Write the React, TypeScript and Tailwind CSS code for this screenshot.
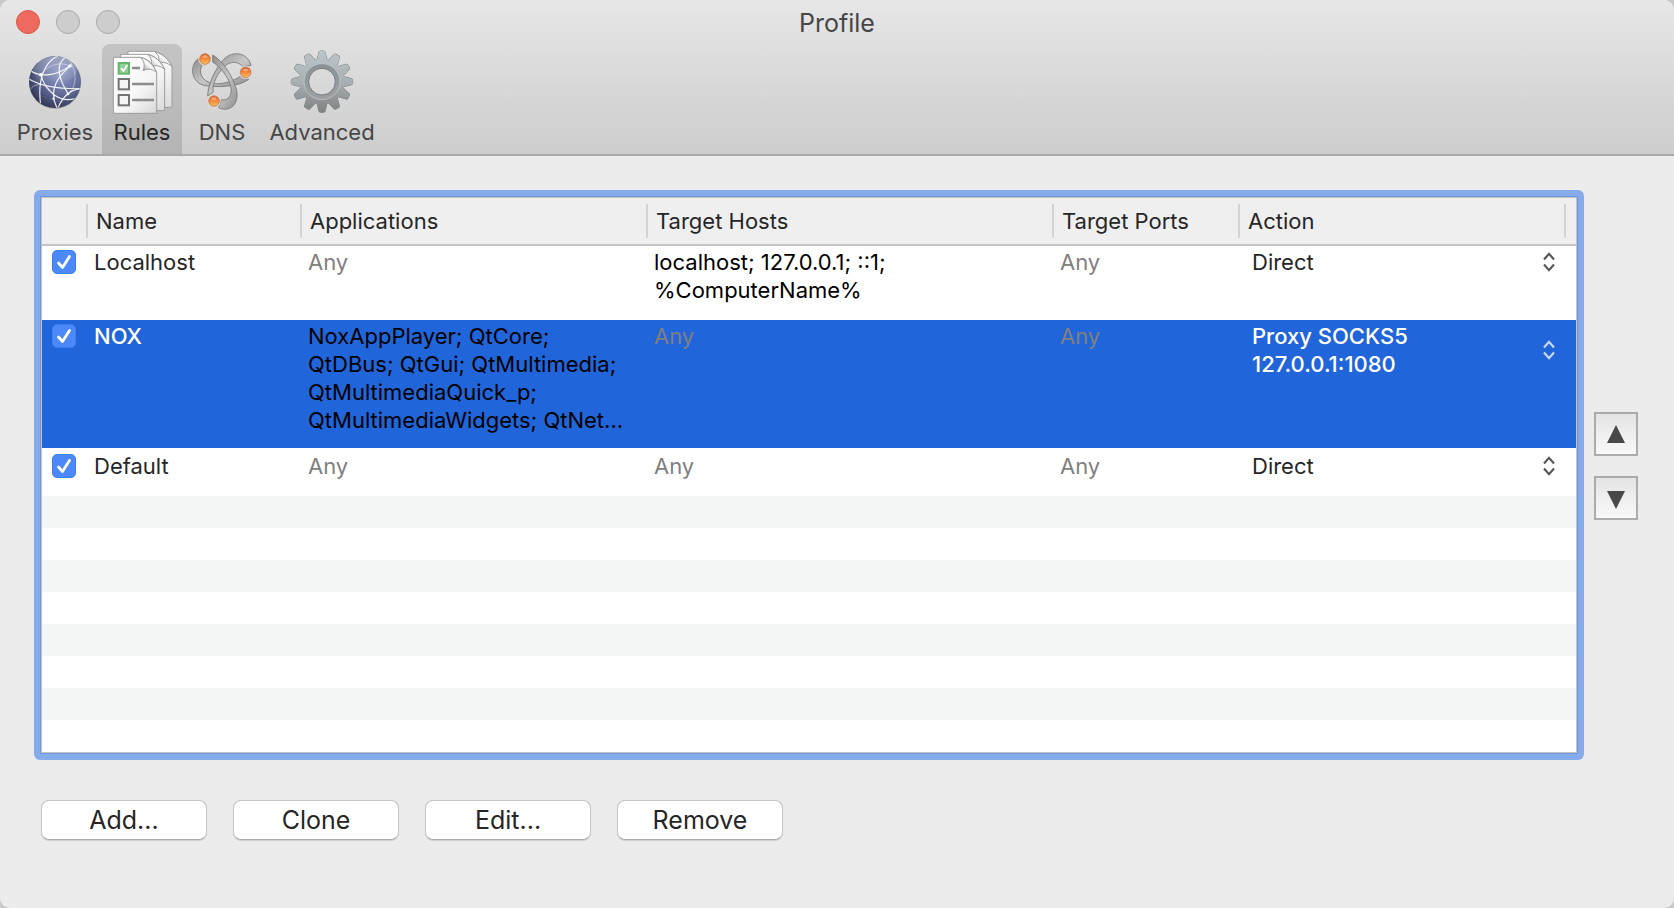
import { useState } from 'react';
import type { ReactNode } from 'react';

interface Rule {
  id: string;
  name: string;
  enabled: boolean;
  applications?: string;
  hosts?: string;
  ports?: string;
  action: string;
  actionDetail?: string;
}

const initialRules: Rule[] = [
  {
    id: 'localhost',
    name: 'Localhost',
    enabled: true,
    hosts: 'localhost; 127.0.0.1; ::1; %ComputerName%',
    action: 'Direct',
  },
  {
    id: 'nox',
    name: 'NOX',
    enabled: true,
    applications:
      'NoxAppPlayer; QtCore; QtDBus; QtGui; QtMultimedia; QtMultimediaQuick_p; QtMultimediaWidgets; QtNet...',
    action: 'Proxy SOCKS5',
    actionDetail: '127.0.0.1:1080',
  },
  { id: 'default', name: 'Default', enabled: true, action: 'Direct' },
];

// Row heights and top padding per rule
const rowStyles: Record<string, { height: string; pad: string }> = {
  localhost: { height: 'h-[74px]', pad: 'pt-0.5' },
  nox: { height: 'h-32', pad: 'pt-0.5' },
  default: { height: 'h-12', pad: 'pt-1' },
};

const GlobeIcon = () => (
  <svg viewBox="69 30 192 192" className="size-16" aria-hidden="true">
    <defs>
      <radialGradient id="globe" cx="0.62" cy="0.35" r="0.75">
        <stop offset="0" stopColor="#8f9cc8" />
        <stop offset="0.5" stopColor="#626d9a" />
        <stop offset="0.85" stopColor="#3a3f60" />
        <stop offset="1" stopColor="#25283f" />
      </radialGradient>
      <linearGradient id="globeShine" x1="0" y1="0" x2="0" y2="1">
        <stop offset="0" stopColor="#ffffff" stopOpacity="0.35" />
        <stop offset="1" stopColor="#ffffff" stopOpacity="0" />
      </linearGradient>
      <clipPath id="globeClip">
        <circle cx="165" cy="126" r="77" />
      </clipPath>
    </defs>
    <ellipse cx="165" cy="130" rx="77" ry="77" fill="#000" opacity="0.18" />
    <circle cx="165" cy="126" r="78" fill="url(#globe)" />
    <g clipPath="url(#globeClip)" fill="none" stroke="#fff">
      <ellipse cx="165" cy="90" rx="66" ry="42" fill="url(#globeShine)" stroke="none" />
      <g strokeWidth="3.5" opacity="0.92">
        <path d="M92 92C120 112 172 110 214 74" />
        <path d="M174 48C136 64 108 118 124 208" />
        <path d="M198 52C164 70 176 118 206 164" />
        <path d="M86 117C124 138 182 148 246 146" />
        <path d="M214 76C176 106 142 150 172 206" />
        <path d="M122 104C138 158 180 188 226 176" />
        <path d="M244 146C214 148 188 168 172 208" />
      </g>
      <g strokeWidth="2.5" opacity="0.55">
        <path d="M122 104C142 78 176 62 210 78" />
        <path d="M208 60C232 96 232 142 200 166" />
        <path d="M88 150C110 124 142 128 164 170" />
      </g>
    </g>
    <g fill="#fff">
      <circle cx="122" cy="104" r="5" />
      <circle cx="210" cy="78" r="5" />
      <circle cx="204" cy="162" r="4" />
      <circle cx="160" cy="176" r="3" />
    </g>
  </svg>
);

const RulesIcon = () => (
  <svg viewBox="30 30 192 192" className="size-16" aria-hidden="true">
    <defs>
      <linearGradient id="page" x1="0" y1="0" x2="1" y2="1">
        <stop offset="0" stopColor="#ffffff" />
        <stop offset="0.6" stopColor="#f6f6f6" />
        <stop offset="1" stopColor="#d8d8d8" />
      </linearGradient>
      <linearGradient id="curl" x1="0" y1="1" x2="1" y2="0">
        <stop offset="0" stopColor="#757575" />
        <stop offset="0.5" stopColor="#fafafa" />
        <stop offset="1" stopColor="#b4b4b4" />
      </linearGradient>
    </defs>
    <g stroke="#9c9c9c" strokeWidth="3">
      <path d="M84 34H164C184 38 204 56 216 80V202H84Z" fill="url(#page)" />
      <path d="M164 35C176 44 180 56 174 70C188 64 204 68 216 80C206 58 188 40 164 35Z" fill="url(#curl)" />
      <path d="M62 43H144C164 47 182 64 194 88V212H62Z" fill="url(#page)" />
      <path d="M144 44C154 52 158 66 152 80C168 74 184 78 194 88C184 66 166 48 144 44Z" fill="url(#curl)" />
      <path d="M40 52H122C142 56 160 72 170 98V220H40Z" fill="url(#page)" />
      <path d="M122 53C132 62 136 76 129 92C146 84 160 88 170 98C160 74 144 56 122 53Z" fill="url(#curl)" />
    </g>
    <rect x="56" y="69" width="31" height="32" fill="#8fd096" stroke="#62b56a" strokeWidth="6" />
    <path d="M63 84L70 93L82 75" fill="none" stroke="#fff" strokeWidth="5" />
    <g fill="#f5f5f5" stroke="#747474" strokeWidth="6">
      <rect x="56" y="117" width="31" height="31" />
      <rect x="56" y="165" width="31" height="31" />
    </g>
    <g stroke="#8c8c8c" strokeWidth="8">
      <path d="M96 84H120" />
      <path d="M96 132H162" />
      <path d="M96 180H162" />
    </g>
  </svg>
);

const DnsIcon = () => (
  <svg viewBox="30 30 192 192" className="size-16" aria-hidden="true">
    <defs>
      <linearGradient id="blade" x1="0" y1="0" x2="1" y2="1">
        <stop offset="0" stopColor="#8e8e8e" />
        <stop offset="0.5" stopColor="#c6c6c6" />
        <stop offset="1" stopColor="#8e8e8e" />
      </linearGradient>
      <linearGradient id="node" x1="0" y1="0" x2="0" y2="1">
        <stop offset="0" stopColor="#e2601c" />
        <stop offset="0.4" stopColor="#f0803a" />
        <stop offset="1" stopColor="#ffbe58" />
      </linearGradient>
    </defs>
    <g fill="url(#blade)" stroke="#767676" strokeWidth="2.5" strokeLinejoin="round">
      <path d="M54 56C28 78 32 126 74 137C110 142 176 142 206 118L182 108C160 124 126 134 98 131C64 122 54 98 67 74Z" />
      <path d="M213 76C202 34 152 30 126 64C104 92 84 132 83 168L100 156C96 138 106 112 124 90C140 66 170 58 188 80Z" />
      <path d="M116 203C150 220 180 190 169 148C160 116 134 66 98 45V66C120 80 144 108 152 138C158 164 146 184 124 179Z" />
    </g>
    {[[75, 57], [197, 97], [102, 183]].map(([cx, cy]) => (
      <g key={cx}>
        <circle cx={cx} cy={cy} r="20" fill="#dcdcdc" />
        <circle cx={cx} cy={cy} r="16" fill="url(#node)" stroke="#b07048" strokeWidth="2" />
        <ellipse cx={cx} cy={cy - 7} rx="8" ry="4" fill="#fff" opacity="0.35" />
      </g>
    ))}
  </svg>
);

const teeth = Array.from({ length: 12 }, (_, i) => i * 30);

const GearIcon = () => (
  <svg viewBox="330 30 192 192" className="size-16" aria-hidden="true">
    <defs>
      <linearGradient id="gear" gradientUnits="userSpaceOnUse" x1="0" y1="32" x2="0" y2="218">
        <stop offset="0" stopColor="#bcc6ca" />
        <stop offset="0.5" stopColor="#a9b0b3" />
        <stop offset="1" stopColor="#7f8182" />
      </linearGradient>
      <linearGradient id="groove" x1="0" y1="0" x2="0" y2="1">
        <stop offset="0" stopColor="#8a9296" />
        <stop offset="1" stopColor="#9da0a2" />
      </linearGradient>
      <mask id="gearShape" maskUnits="userSpaceOnUse" x="330" y="30" width="192" height="192">
        <circle cx="426" cy="125" r="68" fill="#fff" />
        {teeth.map((angle) => (
          <path
            key={angle}
            d="M411 60L417 36Q418 33 421 33H431Q434 33 435 36L441 60Z"
            fill="#fff"
            transform={`rotate(${angle} 426 125)`}
          />
        ))}
        <circle cx="426" cy="125" r="40" fill="#000" />
      </mask>
    </defs>
    <g fill="none" stroke="#7d8183" strokeWidth="3">
      <circle cx="426" cy="125" r="67" />
      {teeth.map((angle) => (
        <path
          key={angle}
          d="M411 60L417 36Q418 33 421 33H431Q434 33 435 36L441 60"
          transform={`rotate(${angle} 426 125)`}
        />
      ))}
    </g>
    <rect x="330" y="30" width="192" height="192" fill="url(#gear)" mask="url(#gearShape)" />
    <circle cx="426" cy="125" r="47" fill="none" stroke="url(#groove)" strokeWidth="13" />
    <circle cx="426" cy="125" r="54" fill="none" stroke="#c6cdd0" strokeWidth="2" />
    <circle cx="426" cy="125" r="40" fill="none" stroke="#797d80" strokeWidth="3" />
  </svg>
);

const tabs: { label: string; width: string; icon: ReactNode }[] = [
  { label: 'Proxies', width: 'w-[94px]', icon: <GlobeIcon /> },
  { label: 'Rules', width: 'w-20', icon: <RulesIcon /> },
  { label: 'DNS', width: 'w-20', icon: <DnsIcon /> },
  { label: 'Advanced', width: 'w-[120px]', icon: <GearIcon /> },
];

const UpDownIcon = ({ className }: { className: string }) => (
  <svg
    viewBox="0 0 12 20"
    className={`h-5 w-3 shrink-0 ${className}`}
    fill="none"
    stroke="currentColor"
    strokeWidth="2.2"
    aria-hidden="true"
  >
    <path d="M1 7.5L6 1.8L11 7.5" />
    <path d="M1 12.5L6 18.2L11 12.5" />
  </svg>
);

const HeaderCell = ({ children }: { children?: ReactNode }) => (
  <th scope="col" className="h-12 border-b-2 border-[#c4c4c4] p-0 text-left font-normal">
    <div className="flex h-[34px] items-center border-r-2 border-[#d3d3d3] px-2">{children}</div>
  </th>
);

const ValueCell = ({ value, pad }: { value?: string; pad: string }) => (
  <td className={`pr-3 pl-1.5 align-top ${pad} ${value ? 'text-black' : 'text-[#808080]'}`}>{value || 'Any'}</td>
);

const App = () => {
  const [rules, setRules] = useState(initialRules);
  const [selectedId, setSelectedId] = useState('nox');
  const [activeTab, setActiveTab] = useState('Rules');

  const toggleRule = (id: string) => {
    setRules(rules.map((rule) => (rule.id === id ? { ...rule, enabled: !rule.enabled } : rule)));
  };

  const changeAction = (id: string, action: string) => {
    setRules(rules.map((rule) => (rule.id === id ? { ...rule, action } : rule)));
  };

  const moveRule = (offset: number) => {
    const from = rules.findIndex((rule) => rule.id === selectedId);
    const to = from + offset;
    if (from < 0 || to < 0 || to >= rules.length) return;
    const next = [...rules];
    [next[from], next[to]] = [next[to], next[from]];
    setRules(next);
  };

  return (
    <div className="min-h-screen bg-[#c9c9c9] font-['Inter','Liberation_Sans',sans-serif] text-[22px] leading-7 text-[#262626]">
      <div className="flex min-h-screen flex-col overflow-hidden rounded-[10px] bg-[#ececec]">
        <header className="border-b-2 border-[#a9a9a9] bg-gradient-to-b from-[#e7e7e7] to-[#cdcdcd]">
          <div className="grid h-11 grid-cols-[1fr_auto_1fr] items-center px-4">
            <div className="flex gap-4">
              <button aria-label="Close" className="size-6 rounded-full border border-[#d9574c] bg-[#ee6a5f]" />
              <button aria-label="Minimize" className="size-6 rounded-full border border-[#a9a9a9] bg-[#cdcdcd]" />
              <button aria-label="Zoom" className="size-6 rounded-full border border-[#a9a9a9] bg-[#cdcdcd]" />
            </div>
            <h1 className="pt-0.5 text-[25px] text-[#464646]">Profile</h1>
          </div>
          <nav className="flex pl-2">
            {tabs.map((tab) => (
              <button
                key={tab.label}
                onClick={() => setActiveTab(tab.label)}
                className={`flex h-[110px] flex-col items-center rounded-t-lg pt-1.5 ${tab.width} ${
                  activeTab === tab.label ? 'bg-black/12 text-[#262626]' : 'text-[#464646]'
                }`}
              >
                {tab.icon}
                <span className="mt-1">{tab.label}</span>
              </button>
            ))}
          </nav>
        </header>

        <main className="flex flex-col pt-[34px] pr-9 pl-[34px]">
          <div className="flex gap-2.5">
            <div className="min-w-0 flex-1 rounded-md bg-[#86abeb] p-1.5">
              <div className="border border-[#6f98dc]">
                <div className="border border-[#c3c3c3] bg-white">
                  <table className="w-full table-fixed border-separate border-spacing-0">
                    <colgroup>
                      <col className="w-[46px]" />
                      <col className="w-[214px]" />
                      <col className="w-[346px]" />
                      <col className="w-[406px]" />
                      <col className="w-[186px]" />
                      <col />
                      <col className="w-2.5" />
                    </colgroup>
                    <thead className="bg-[#efefef]">
                      <tr>
                        <HeaderCell />
                        <HeaderCell>Name</HeaderCell>
                        <HeaderCell>Applications</HeaderCell>
                        <HeaderCell>Target Hosts</HeaderCell>
                        <HeaderCell>Target Ports</HeaderCell>
                        <HeaderCell>Action</HeaderCell>
                        <td className="border-b-2 border-[#c4c4c4]" />
                      </tr>
                    </thead>
                    <tbody>
                      {rules.map((rule) => {
                        const selected = rule.id === selectedId;
                        const { height, pad } = rowStyles[rule.id];
                        return (
                          <tr
                            key={rule.id}
                            onClick={() => setSelectedId(rule.id)}
                            className={`${height} ${selected ? 'bg-[#2165da]' : ''}`}
                          >
                            <td className={`align-top ${pad}`}>
                              <label className="relative flex h-7 items-center pl-2.5">
                                <input
                                  type="checkbox"
                                  aria-label={`Enable ${rule.name}`}
                                  checked={rule.enabled}
                                  onChange={() => toggleRule(rule.id)}
                                  className="peer size-6 appearance-none rounded-[5px] border border-[#3f7ef0] bg-white checked:bg-[#4a89f7]"
                                />
                                <svg
                                  viewBox="0 0 24 24"
                                  className="pointer-events-none absolute left-2.5 hidden size-6 peer-checked:block"
                                  fill="none"
                                  stroke="#fff"
                                  strokeWidth="2.8"
                                  strokeLinecap="round"
                                  strokeLinejoin="round"
                                  aria-hidden="true"
                                >
                                  <path d="M6.5 13L10.5 17.5L17.5 6.5" />
                                </svg>
                              </label>
                            </td>
                            <td className={`px-1.5 align-top ${pad} ${selected ? 'font-medium text-white' : ''}`}>
                              {rule.name}
                            </td>
                            <ValueCell value={rule.applications} pad={pad} />
                            <ValueCell value={rule.hosts} pad={pad} />
                            <ValueCell value={rule.ports} pad={pad} />
                            <td className={`pr-[11px] pl-3 align-top ${pad}`}>
                              <div className="flex items-center">
                                <div className={`flex-1 ${selected ? 'font-medium text-white' : ''}`}>
                                  <select
                                    aria-label={`Action for ${rule.name}`}
                                    value={rule.action}
                                    onChange={(e) => changeAction(rule.id, e.target.value)}
                                    className="block h-7 w-full appearance-none bg-transparent"
                                  >
                                    <option>Direct</option>
                                    <option>Proxy SOCKS5</option>
                                    <option>Block</option>
                                  </select>
                                  {rule.actionDetail && <div>{rule.actionDetail}</div>}
                                </div>
                                <UpDownIcon className={selected ? 'text-[#c8daf8]' : 'text-[#585858]'} />
                              </div>
                            </td>
                            <td />
                          </tr>
                        );
                      })}
                    </tbody>
                  </table>
                  {Array.from({ length: 8 }, (_, i) => (
                    <div key={i} className="h-8 odd:bg-white even:bg-[#f4f5f5]" />
                  ))}
                </div>
              </div>
            </div>

            <div className="flex flex-col justify-center gap-5 pb-[18px]">
              <button
                aria-label="Move up"
                onClick={() => moveRule(-1)}
                className="flex size-11 items-center justify-center border-2 border-[#acacac] bg-gradient-to-b from-[#e4e4e4] to-[#f8f8f8]"
              >
                <svg viewBox="0 0 18 18" className="size-[18px]" fill="#484848" aria-hidden="true">
                  <path d="M9 0L18 18H0Z" />
                </svg>
              </button>
              <button
                aria-label="Move down"
                onClick={() => moveRule(1)}
                className="flex size-11 items-center justify-center border-2 border-[#acacac] bg-gradient-to-b from-[#e4e4e4] to-[#f8f8f8] pt-1"
              >
                <svg viewBox="0 0 18 18" className="size-[18px]" fill="#484848" aria-hidden="true">
                  <path d="M0 0H18L9 18Z" />
                </svg>
              </button>
            </div>
          </div>

          <div className="flex gap-[26px] pt-10 pb-10 pl-[7px]">
            {['Add...', 'Clone', 'Edit...', 'Remove'].map((label) => (
              <button
                key={label}
                className="h-10 w-[166px] rounded-lg border border-[#c6c6c6] border-b-[#acacac] bg-white text-[25px] shadow-[0_1px_1px_rgba(0,0,0,0.12)]"
              >
                {label}
              </button>
            ))}
          </div>
        </main>
      </div>
    </div>
  );
};

export default App;
